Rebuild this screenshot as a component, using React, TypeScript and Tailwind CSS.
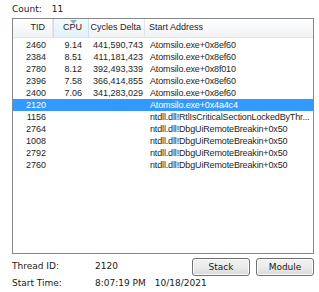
const rows = [
  { tid: "2460", cpu: "9.14", cycles: "441,590,743", addr: "Atomsilo.exe+0x8ef60" },
  { tid: "2384", cpu: "8.51", cycles: "411,181,423", addr: "Atomsilo.exe+0x8ef60" },
  { tid: "2780", cpu: "8.12", cycles: "392,493,339", addr: "Atomsilo.exe+0x8f010" },
  { tid: "2396", cpu: "7.58", cycles: "366,414,855", addr: "Atomsilo.exe+0x8ef60" },
  { tid: "2400", cpu: "7.06", cycles: "341,283,029", addr: "Atomsilo.exe+0x8ef60" },
  { tid: "2120", cpu: "", cycles: "", addr: "Atomsilo.exe+0x4a4c4", selected: true },
  { tid: "1156", cpu: "", cycles: "", addr: "ntdll.dll!RtlIsCriticalSectionLockedByThr..." },
  { tid: "2764", cpu: "", cycles: "", addr: "ntdll.dll!DbgUiRemoteBreakin+0x50" },
  { tid: "1008", cpu: "", cycles: "", addr: "ntdll.dll!DbgUiRemoteBreakin+0x50" },
  { tid: "2792", cpu: "", cycles: "", addr: "ntdll.dll!DbgUiRemoteBreakin+0x50" },
  { tid: "2760", cpu: "", cycles: "", addr: "ntdll.dll!DbgUiRemoteBreakin+0x50" },
];

function WinButton({ label }: { label: string }) {
  return (
    <button className="h-[18px] w-[58px] rounded-[3px] border border-[#707070] bg-gradient-to-b from-[#f2f2f2] via-[#ebebeb] to-[#d9d9d9] text-[9px] text-[#1a1a1a] leading-none font-['DejaVu_Sans',sans-serif] shadow-[inset_0_0_0_1px_#fcfcfc]">
      {label}
    </button>
  );
}

export default function App() {
  return (
    <div className="w-[319px] h-[292px] bg-white text-black font-['Liberation_Sans',Arial,sans-serif] overflow-hidden">
      {/* count */}
      <div className="h-[18px] pl-[12px] pt-[3px] text-[9px] leading-[12px] font-['DejaVu_Sans',sans-serif] text-[#1a1a1a]">
        Count:<span className="ml-[10px]">11</span>
      </div>

      {/* thread list */}
      <div className="ml-[12px] w-[302px] h-[236px] border border-[#828790] bg-white text-[9px]">
        <div className="flex h-[19px] bg-gradient-to-b from-white to-[#f1f2f4] border-b border-[#e3e5e8] text-[#1e1e1e]">
          <div className="w-[40px] flex items-center justify-end pr-[7px] border-r border-[#e3e5e8]">TID</div>
          <div className="relative w-[36px] flex items-center justify-end pr-[6px] bg-gradient-to-b from-[#f2f9fd] to-[#e1f0fa] border-x border-[#c4e1f3]">
            <svg className="absolute left-[16px] top-[1px]" width="7" height="4" viewBox="0 0 7 4">
              <path d="M0 0 L7 0 L3.5 4 Z" fill="#97aebd" />
            </svg>
            CPU
          </div>
          <div className="w-[56px] flex items-center justify-end pr-[3px] border-r border-[#e3e5e8]">Cycles Delta</div>
          <div className="flex-1 flex items-center pl-[4px]">Start Address</div>
        </div>
        <div className="pt-[1px]">
          {rows.map((r) => (
            <div
              key={r.tid}
              className={`flex h-[12px] items-center leading-[12px] ${r.selected ? "bg-[#3399ff] text-white" : "text-[#1e1e1e]"}`}
            >
              <div className="w-[40px] text-right pr-[7px]">{r.tid}</div>
              <div className="w-[36px] text-right pr-[7px]">{r.cpu}</div>
              <div className="w-[56px] text-right pr-[2px]">{r.cycles}</div>
              <div className="flex-1 pl-[5px] whitespace-nowrap tracking-[-0.15px]">{r.addr}</div>
            </div>
          ))}
        </div>
      </div>

      {/* details */}
      <div className="mt-[4px] pl-[12px] pr-[5px] font-['DejaVu_Sans',sans-serif] text-[9px] text-[#1a1a1a]">
        <div className="flex items-center h-[18px]">
          <div className="w-[83px]">Thread ID:</div>
          <div className="flex-1">2120</div>
          <div className="flex gap-[6px]">
            <WinButton label="Stack" />
            <WinButton label="Module" />
          </div>
        </div>
        <div className="flex items-center h-[14px] mt-[1px]">
          <div className="w-[83px]">Start Time:</div>
          <div className="whitespace-nowrap">
            8:07:19 PM<span className="ml-[9px]">10/18/2021</span>
          </div>
        </div>
      </div>
    </div>
  );
}
